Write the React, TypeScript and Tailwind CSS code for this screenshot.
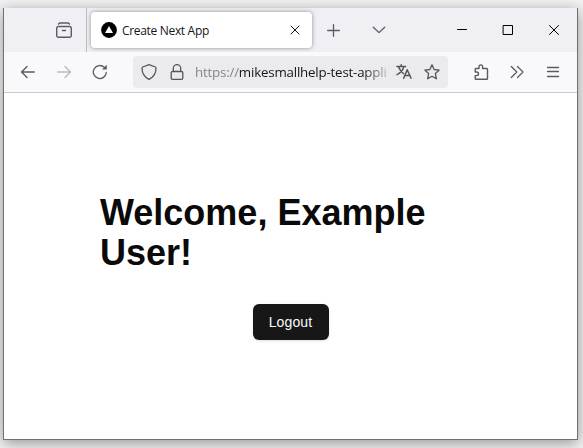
import type { ReactNode } from 'react'

type IconProps = { className?: string; width?: number; children: ReactNode }

function Icon({ className = '', width = 1.3, children }: IconProps) {
  return (
    <svg
      viewBox="0 0 16 16"
      className={`h-4 w-4 shrink-0 ${className}`}
      fill="none"
      stroke="currentColor"
      strokeWidth={width}
      strokeLinecap="round"
      strokeLinejoin="round"
    >
      {children}
    </svg>
  )
}

function TabStrip() {
  return (
    <div className="flex h-11 items-center bg-[#f0eff4] text-[#5b5b66]">
      <Icon className="ml-[52px]" width={1.4}>
        <path d="M2.500 2.100Q2.800 1 4 1h8q1.200 0 1.500 1.100" />
        <path d="M2.400 4.500h11.200a1.700 1.700 0 0 1 1.700 1.700v7.300a1.800 1.800 0 0 1-1.800 1.800h-11a1.800 1.800 0 0 1-1.800-1.800V6.200a1.700 1.700 0 0 1 1.700-1.700zM6.500 8.500h3" />
      </Icon>
      <div className="ml-3.5 h-full w-px bg-[#babac0]" />
      <div className="ml-1 flex h-9 w-[221px] items-center rounded bg-white text-[#15141a] shadow-[0_0_4px_rgba(90,90,100,0.65)]">
        <svg viewBox="0 0 16 16" className="ml-2.5 h-4 w-4 shrink-0">
          <circle cx="8" cy="8" r="7.9" fill="#000" />
          <path d="M8 4.1 12 11H4z" fill="#fff" />
        </svg>
        <span className="ml-[5px] w-[161px] whitespace-nowrap pt-[2px] font-['Open_Sans','Noto_Sans',sans-serif] text-[12px] tracking-[-0.32px]">
          Create Next App
        </span>
        <Icon className="ml-1" width={1}>
          <path d="m4 4 8 8M12 4l-8 8" />
        </Icon>
      </div>
      <Icon className="ml-[13px]">
        <path d="M8.500 2.700v11.600M2.700 8.500h11.600" />
      </Icon>
      <Icon className="ml-[30px]">
        <path d="m2.300 5.200 5.700 5.400 5.700-5.400" />
      </Icon>
      <div className="ml-[67px] flex gap-[30px] text-black">
        <Icon width={1}>
          <path d="M3.500 7.500h9" />
        </Icon>
        <Icon width={1}>
          <path d="M3.500 3.500h9v9h-9z" strokeLinejoin="miter" />
        </Icon>
        <Icon width={1}>
          <path d="m3.500 3.500 9 9M12.500 3.500l-9 9" />
        </Icon>
      </div>
    </div>
  )
}

function AddressBar() {
  return (
    <div className="flex h-8 w-[315px] shrink-0 items-center rounded bg-[#ebebed] text-[#55555f]">
      <Icon className="ml-2">
        <path d="M8 .7 14.300 3c.4.200.7.500.7.900 0 5.700-2.300 9.100-7 11.400C3.300 13 1 9.600 1 3.900c0-.4.300-.7.700-.9z" />
      </Icon>
      <Icon className="ml-3">
        <path d="M4.300 7.500V4.300a3.700 3.700 0 0 1 7.400 0v3.200M3.500 7.500h9a1.300 1.300 0 0 1 1.300 1.300v5.200a1.300 1.300 0 0 1-1.300 1.300h-9A1.300 1.300 0 0 1 2.200 14V8.800a1.300 1.300 0 0 1 1.300-1.300z" />
      </Icon>
      <div className="ml-[10px] w-[196px] whitespace-nowrap pt-[2px] font-['Open_Sans','Noto_Sans',sans-serif] text-[13.33px] tracking-[-0.2px] text-[#15141a] [mask-image:linear-gradient(to_right,black_168px,transparent_198px)]">
        <span className="text-[#858589]">https://</span>mikesmallhelp-test-appli
      </div>
      <Icon className="ml-[5px]" width={1.5}>
        <path d="M.9 2.600h8.700M5.200.8v1.800M7.800 2.800C6.800 6.300 4.600 9 1 10.600M2.600 3c1.100 3 2.800 5.300 5 6.700" />
        <path d="m7.700 14.200 3.500-8.500 3.800 8.500M8.800 11.600h5.200" />
      </Icon>
      <Icon className="ml-3">
        <path d="m8 .8 2.100 4.700 5.100.6-3.800 3.500 1 5.200L8 12.300l-4.400 2.500 1-5.200L.8 6.100l5.100-.6z" />
      </Icon>
    </div>
  )
}

function Toolbar() {
  return (
    <div className="flex h-10 items-center bg-[#f9f9fb] text-[#5b5b66]">
      <Icon className="ml-4" width={1.4}>
        <path d="M14.300 8H1.700M7 2.500 1.500 8 7 13.500" />
      </Icon>
      <Icon className="ml-5 text-[#b9b9bf]" width={1.4}>
        <path d="M1.700 8h12.600M9 2.500 14.500 8 9 13.500" />
      </Icon>
      <Icon className="ml-5 mr-[25px]">
        <path d="M14.300 8.500A6.500 6.500 0 1 1 12.300 3.300" />
        <path d="M14.800.8v4.800H10z" fill="currentColor" stroke="none" />
      </Icon>
      <AddressBar />
      <Icon className="ml-[25px]" width={1.4}>
        <path d="M2.200 6.700V5.300a.8.800 0 0 1 .8-.8h3V2.700a1.800 1.800 0 0 1 3.600 0v1.800h4.100a.8.800 0 0 1 .8.800v9.200a.8.800 0 0 1-.8.800H3a.8.800 0 0 1-.8-.8v-2.900h1.500a1.800 1.800 0 0 0 0-3.600H2.200z" />
      </Icon>
      <Icon className="ml-5">
        <path d="M2.300 2.500 7.800 8l-5.500 5.500M8.500 2.500 14 8l-5.500 5.500" />
      </Icon>
      <Icon className="ml-5">
        <path d="M2.500 3.500h11M2.500 7.500h11M2.500 12.500h11" />
      </Icon>
    </div>
  )
}

export default function App() {
  return (
    <div className="h-[448px] w-[583px] overflow-hidden bg-[#f3f3f3] pl-[3px] pt-2">
      <div className="flex h-[432px] w-[575px] flex-col border-x border-b border-[#707070] bg-white shadow-[0_3px_14px_rgba(0,0,0,0.4)]">
        <TabStrip />
        <Toolbar />
        <div className="h-px shrink-0 bg-[#cccccc]" />
        <main className="flex flex-1 flex-col items-center pt-[100px] font-['Liberation_Sans',Arial,sans-serif]">
          <h1 className="w-[381px] text-4xl font-bold text-[#0a0a0a]">Welcome, Example User!</h1>
          <button className="mt-[31px] h-9 w-[76px] rounded-md bg-[#171717] text-sm tracking-[0.15px] text-[#fafafa] shadow-sm">
            Logout
          </button>
        </main>
      </div>
    </div>
  )
}
